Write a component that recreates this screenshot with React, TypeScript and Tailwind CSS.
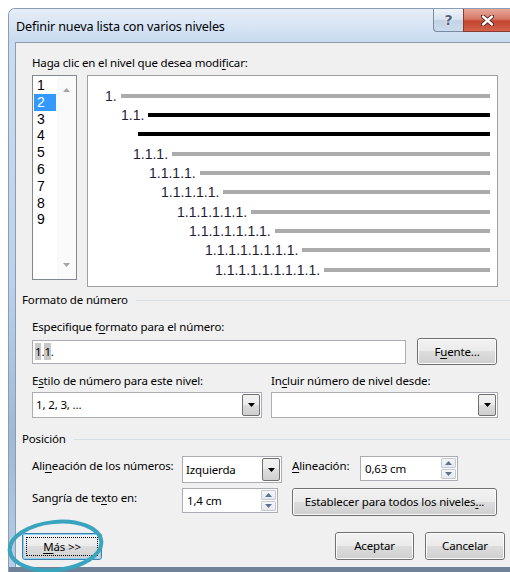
import React from "react";

type PreviewRow = { pad: string; text: string; bar: string };

// Indented preview of the nine list levels; level 2 (selected) is drawn in black.
const previewRows: PreviewRow[] = [
  { pad: "pl-[17px]", text: "1.", bar: "h-[4px] bg-[#ababab]" },
  { pad: "pl-[33px]", text: "1.1.", bar: "h-[4px] bg-black" },
  { pad: "pl-[50px]", text: "", bar: "h-[4px] bg-black" },
  { pad: "pl-[45px]", text: "1.1.1.", bar: "h-[4px] bg-[#ababab]" },
  { pad: "pl-[61px]", text: "1.1.1.1.", bar: "h-[4px] bg-[#ababab]" },
  { pad: "pl-[73px]", text: "1.1.1.1.1.", bar: "h-[4px] bg-[#ababab]" },
  { pad: "pl-[89px]", text: "1.1.1.1.1.1.", bar: "h-[4px] bg-[#ababab]" },
  { pad: "pl-[101px]", text: "1.1.1.1.1.1.1.", bar: "h-[4px] bg-[#ababab]" },
  { pad: "pl-[117px]", text: "1.1.1.1.1.1.1.1.", bar: "h-[4px] bg-[#ababab]" },
  { pad: "pl-[127px]", text: "1.1.1.1.1.1.1.1.1.", bar: "h-[4px] bg-[#ababab]" },
];

const levels = ["1", "2", "3", "4", "5", "6", "7", "8", "9"];

function U({ children }: { children: React.ReactNode }) {
  return <span className="underline decoration-1 underline-offset-[2px]">{children}</span>;
}

function TriDown({ color = "#000" }: { color?: string }) {
  return (
    <svg width="7" height="4" viewBox="0 0 7 4">
      <path d="M0 0 H7 L3.5 4 Z" fill={color} />
    </svg>
  );
}

function TriUp({ color = "#000" }: { color?: string }) {
  return (
    <svg width="7" height="4" viewBox="0 0 7 4">
      <path d="M0 4 H7 L3.5 0 Z" fill={color} />
    </svg>
  );
}

function Button({
  children,
  className,
  focused,
}: {
  children: React.ReactNode;
  className: string;
  focused?: boolean;
}) {
  return (
    <div
      className={`relative flex items-center justify-center rounded-[3px] border ${
        focused ? "border-[#3c7fb1]" : "border-[#707070]"
      } bg-[linear-gradient(180deg,#f2f2f2,#ebebeb_50%,#dddddd_50%,#cfcfcf)] ${className}`}
    >
      <div
        className={`pointer-events-none absolute inset-0 rounded-[2px] border ${
          focused ? "border-[#8fd2f5]" : "border-[#fbfbfb]"
        }`}
      />
      {focused && (
        <div className="pointer-events-none absolute inset-[3px] border border-dotted border-black" />
      )}
      <span className="relative whitespace-nowrap">{children}</span>
    </div>
  );
}

function DropButton() {
  return (
    <div className="flex h-full w-[18px] items-center justify-center rounded-[2px] border border-[#707070] bg-[linear-gradient(180deg,#f2f2f2,#ebebeb_50%,#dddddd_50%,#cfcfcf)]">
      <TriDown />
    </div>
  );
}

function Spinner({ value, width }: { value: string; width: string }) {
  return (
    <div className={`flex h-[25px] ${width} border border-[#abadb3] bg-white`}>
      <div className="flex-1 pl-[4px] leading-[23px]">{value}</div>
      <div className="flex w-[17px] flex-col gap-px p-px">
        <div className="flex flex-1 items-center justify-center rounded-[1px] border border-[#c3cad3] bg-[linear-gradient(180deg,#f6f6f6,#e5e9ee)]">
          <TriUp color="#5a7393" />
        </div>
        <div className="flex flex-1 items-center justify-center rounded-[1px] border border-[#c3cad3] bg-[linear-gradient(180deg,#f6f6f6,#e5e9ee)]">
          <TriDown color="#5a7393" />
        </div>
      </div>
    </div>
  );
}

function GroupHeader({ label }: { label: string }) {
  return (
    <div className="flex h-[16px] items-center pl-[6px] leading-[16px]">
      <span>{label}</span>
      <div className="ml-[8px] h-px flex-1 bg-[#d5dfe5]" />
    </div>
  );
}

export default function App() {
  return (
    <div className="relative h-[572px] w-[510px] overflow-hidden bg-white font-['Noto_Sans',sans-serif] text-[11.5px] tracking-[-0.15px] text-black">
      <div className="ml-[8px] mt-[8px] flex h-[564px] flex-col overflow-hidden rounded-tl-[7px] border-l border-t border-[#8a9db3] bg-[#c8dbef]">
        {/* caption bar */}
        <div className="flex h-[33px] shrink-0 items-start bg-[linear-gradient(180deg,#e6eef8,#d6e4f4_55%,#c8daf0)]">
          <div className="pl-[7px] pt-[9px] text-[12.6px] leading-[18px] text-black">
            Definir nueva lista con varios niveles
          </div>
          <div className="ml-auto flex h-[23px]">
            <div className="flex w-[30px] items-center justify-center rounded-bl-[4px] border-b border-l border-[#7a8ba1] bg-[linear-gradient(180deg,#eef3f9,#d6e2ef_50%,#c2d3e6_50%,#cbdbec)]">
              <span className="font-['DejaVu_Sans',sans-serif] text-[14px] font-bold leading-none tracking-normal text-[#52627a] [text-shadow:0_0_2px_#fff,0_0_1px_#fff]">
                ?
              </span>
            </div>
            <div className="flex w-[47px] items-center justify-center border-b border-l border-[#8d3a2e] bg-[linear-gradient(180deg,#e8a79a,#d67a66_45%,#c4442f_55%,#d2634c)]">
              <svg width="13" height="11" viewBox="0 0 13 11">
                <path d="M2 1.5 L11 9.5 M11 1.5 L2 9.5" stroke="#4a1b14" strokeWidth="4.2" strokeLinecap="round" />
                <path d="M2 1.5 L11 9.5 M11 1.5 L2 9.5" stroke="#ffffff" strokeWidth="2.4" strokeLinecap="round" />
              </svg>
            </div>
          </div>
        </div>

        <div className="flex min-h-0 flex-1">
          {/* left frame edge */}
          <div className="w-[6px] shrink-0 bg-[linear-gradient(180deg,#c9dcf0,#bcd2ec_45%,#9fb9d6_75%,#b6cde7)]" />

          {/* client area */}
          <div className="flex flex-1 flex-col border-l border-t border-[#8b9bb0] bg-[#f0f0f0]">
            <div className="mt-[12px] pl-[16px] leading-[16px]">
              Haga clic en el nivel que desea modi<U>f</U>icar:
            </div>

            <div className="mt-[4px] flex gap-[10px] pl-[16px]">
              {/* level list */}
              <div className="flex h-[205px] w-[45px] border border-[#828790] bg-white font-['Liberation_Sans',sans-serif] text-[14px] tracking-normal">
                <div className="w-[24px] px-px pt-px">
                  {levels.map((n) => (
                    <div
                      key={n}
                      className={`h-[16.8px] pl-[3px] leading-[16.8px] ${
                        n === "2" ? "bg-[#3399ff] text-white" : "text-black"
                      }`}
                    >
                      {n}
                    </div>
                  ))}
                </div>
                <div className="flex flex-1 flex-col items-center justify-between bg-[#fafafa] pb-[12px] pt-[12px]">
                  <TriUp color="#a3a3a3" />
                  <TriDown color="#a3a3a3" />
                </div>
              </div>

              {/* preview */}
              <div className="h-[212px] w-[411px] border border-[#a0a0a0] bg-white pr-[7px] pt-[10px] font-['Liberation_Sans',sans-serif] text-[14px] tracking-normal text-[#1e1e36]">
                {previewRows.map((r, i) => (
                  <div key={i} className={`flex h-[19.33px] items-center ${r.pad}`}>
                    {r.text && <span className="mr-[4px] leading-none">{r.text}</span>}
                    <div className={`flex-1 ${r.bar}`} />
                  </div>
                ))}
              </div>
            </div>

            <div className="mt-[5px]">
              <GroupHeader label="Formato de número" />
            </div>

            <div className="mt-[11px] pl-[16px] leading-[16px]">
              Especifique f<U>o</U>rmato para el número:
            </div>

            <div className="mt-[3px] flex h-[27px] items-center pl-[16px]">
              <div className="flex h-[24px] w-[374px] items-center border border-[#abadb3] bg-white pl-[2px]">
                <span className="bg-[#c8c8c8]">1</span>
                <span>.</span>
                <span className="bg-[#c8c8c8]">1</span>
                <span>.</span>
              </div>
              <Button className="ml-[11px] h-[27px] w-[80px]">
                F<U>u</U>ente...
              </Button>
            </div>

            <div className="mt-[8px] flex h-[16px] pl-[16px] leading-[16px]">
              <div className="w-[239px]">
                E<U>s</U>tilo de número para este nivel:
              </div>
              <div>
                In<U>c</U>luir número de nivel desde:
              </div>
            </div>

            <div className="mt-[3px] flex h-[26px] pl-[16px]">
              <div className="flex h-[26px] w-[230px] items-center border border-[#abadb3] bg-white p-px">
                <div className="flex-1 pl-[2px]">1, 2, 3, ...</div>
                <DropButton />
              </div>
              <div className="ml-[9px] flex h-[26px] w-[227px] items-center border border-[#abadb3] bg-white p-px">
                <div className="flex-1" />
                <DropButton />
              </div>
            </div>

            <div className="mt-[13px]">
              <GroupHeader label="Posición" />
            </div>

            <div className="mt-[9px] flex h-[27px] items-start pl-[16px]">
              <div className="w-[150px] whitespace-nowrap pt-[2px] leading-[16px]">
                Ali<U>n</U>eación de los números:
              </div>
              <div className="flex h-[27px] w-[100px] items-center border border-[#abadb3] bg-white p-px">
                <div className="flex-1 pl-[2px]">Izquierda</div>
                <DropButton />
              </div>
              <div className="ml-[10px] w-[68px] whitespace-nowrap pt-[2px] leading-[16px]">
                <U>A</U>lineación:
              </div>
              <Spinner value="0,63 cm" width="w-[98px]" />
            </div>

            <div className="mt-[5px] flex h-[28px] items-start pl-[16px]">
              <div className="w-[150px] whitespace-nowrap pt-[2px] leading-[16px]">
                Sangría de te<U>x</U>to en:
              </div>
              <Spinner value="1,4 cm" width="w-[96px]" />
              <Button className="ml-[14px] h-[28px] w-[205px]">
                Establecer para todos los niveles<U>.</U>..
              </Button>
            </div>

            <div className="mt-[16px] flex h-[28px] items-end pl-[6px] pr-[5px]">
              <Button focused className="h-[27px] w-[80px]">
                <U>M</U>ás &gt;&gt;
              </Button>
              <Button className="ml-auto h-[28px] w-[79px]">Aceptar</Button>
              <Button className="ml-[11px] h-[28px] w-[80px]">Cancelar</Button>
            </div>
          </div>
        </div>

        {/* bottom frame edge */}
        <div className="h-[5px] shrink-0 bg-[#6f8297]" />
      </div>

      {/* highlight ring drawn over the "Más" button */}
      <svg className="pointer-events-none absolute left-0 top-0" width="510" height="572" viewBox="0 0 510 572">
        <ellipse
          cx="55.5"
          cy="546"
          rx="46"
          ry="24"
          fill="none"
          stroke="#3aa3be"
          strokeWidth="4"
          transform="rotate(-6 55.5 546)"
        />
      </svg>
    </div>
  );
}
